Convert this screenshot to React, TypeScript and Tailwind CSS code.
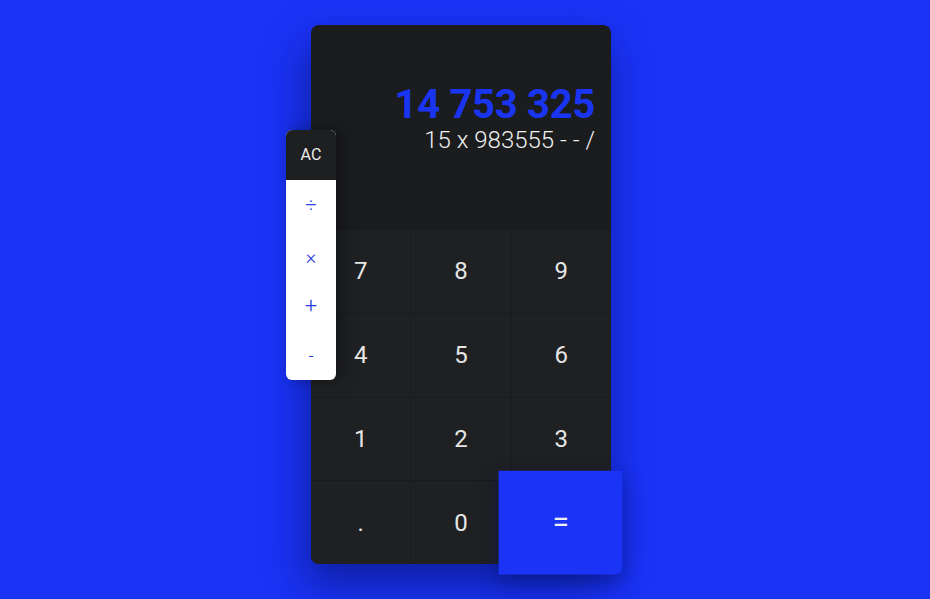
import React from "react";

const keys = ["7", "8", "9", "4", "5", "6", "1", "2", "3", "."];

export default function App() {
  return (
    <div
      className="min-h-screen w-full bg-[#1a33f5] pl-[311px] pt-[25px]"
      style={{ fontFamily: "Roboto, 'Liberation Sans', sans-serif" }}
    >
      <div className="relative w-[300px] h-[539px] rounded-lg bg-[#1b1c1e] shadow-[-4px_20px_40px_rgba(5,15,90,0.55)]">
        {/* display */}
        <div className="h-[205px] flex flex-col items-end pt-[60px] pr-4">
          <div className="text-[40px] leading-none font-bold tracking-[-0.3px] text-[#1a35f2]">14 753 325</div>
          <div className="text-[24px] leading-[30px] font-light text-[#f0f0f0]">15 x 983555 - - /</div>
        </div>
        {/* keypad */}
        <div className="grid grid-cols-3 grid-rows-4 h-[334px] rounded-b-lg bg-[#1a1b1d] gap-px">
          {keys.map((k, i) => (
            <div
              key={k}
              className={`flex items-center justify-center bg-[#1f2022] text-[24px] text-[#e6e6e6] ${
                i === 9 ? "rounded-bl-lg" : ""
              }`}
            >
              {k}
            </div>
          ))}
          <div className="flex items-center justify-center bg-[#1f2022] text-[24px] text-[#e6e6e6]">0</div>
          <div className="relative z-10 flex items-center justify-center bg-[#1a33f5] text-[24px] text-[#f0f0f0] scale-125 -translate-x-[1px] rounded-br-md shadow-[0_6px_16px_rgba(5,15,90,0.45)]">
            =
          </div>
        </div>
        {/* operators */}
        <div className="absolute left-[-25px] top-[105px] w-[50px] rounded-md bg-white shadow-[6px_0_16px_rgba(0,0,0,0.35)] overflow-hidden">
          <div className="h-[50px] flex items-center justify-center bg-[#1e1f21] text-[16px] text-[#ececec]">AC</div>
          <div className="h-[50px] flex items-center justify-center text-[20px] font-light text-[#2a3ee6]">÷</div>
          <div className="h-[50px] flex items-center justify-center text-[20px] font-light text-[#2a3ee6] pt-[4px]">×</div>
          <div className="h-[50px] flex items-center justify-center text-[22px] font-light text-[#2a3ee6]">+</div>
          <div className="h-[50px] flex items-center justify-center text-[18px] font-light text-[#2a3ee6]">-</div>
        </div>
      </div>
    </div>
  );
}
